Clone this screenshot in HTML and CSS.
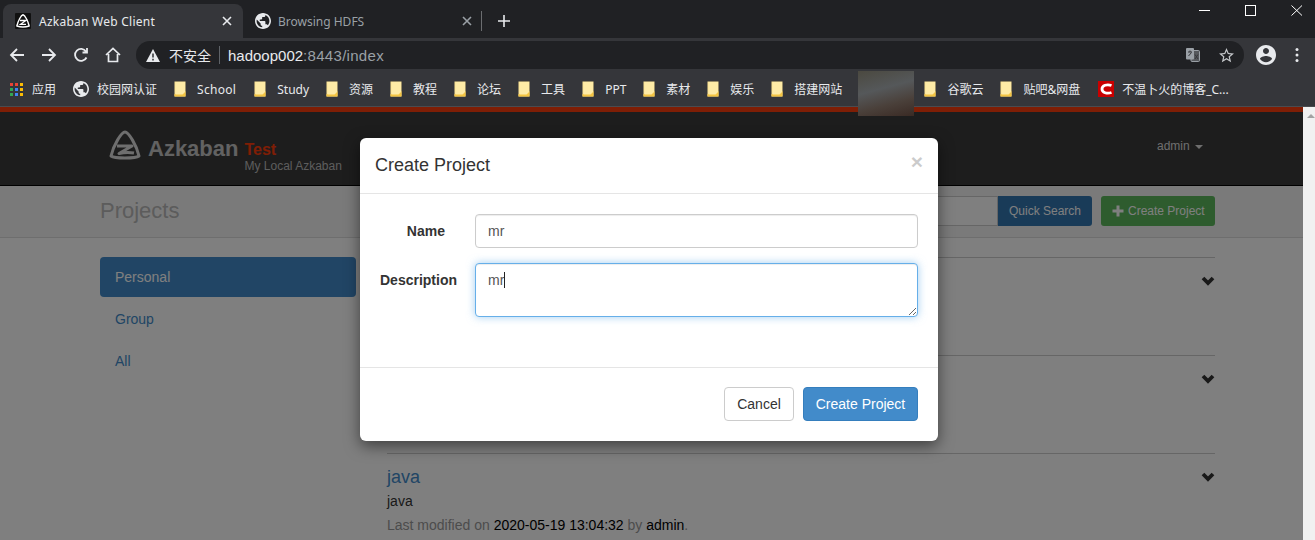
FILE: index.html
```html
<!DOCTYPE html>
<html lang="en">
<head>
    <meta charset="UTF-8">
    <meta name="viewport" content="width=device-width, initial-scale=1.0">
    <title>Azkaban Web Client</title>
    <link rel="stylesheet" href="styles.css">
</head>
<body>
    <svg class="defs" width="0" height="0">
        <symbol id="folder" viewBox="0 0 12 16">
            <path d="M0.500 0.500H11.500V15.500H0.500Z" fill="#fde293"/>
            <path d="M0.500 15.500H11.500V10L8.500 13H0.500Z" fill="#f5c542"/>
            <path d="M1.500 1H11V11L8.500 13.500H1.500Z" fill="#feeba6"/>
        </symbol>
        <symbol id="globe" viewBox="2 2 20 20">
            <path fill="#e8eaed" d="M12 2C6.480 2 2 6.480 2 12s4.480 10 10 10 10-4.480 10-10S17.520 2 12 2zm-1 17.930c-3.950-.490-7-3.850-7-7.930 0-.620.080-1.210.210-1.790L9 15v1c0 1.100.900 2 2 2v1.930zm6.900-2.540c-.260-.810-1-1.390-1.900-1.390h-1v-3c0-.550-.450-1-1-1H8v-2h2c.550 0 1-.450 1-1V7h2c1.100 0 2-.900 2-2v-.410c2.930 1.190 5 4.060 5 7.410 0 2.080-.800 3.970-2.100 5.390z"/>
        </symbol>
        <symbol id="x" viewBox="0 0 10 10">
            <path d="M1 1L9 9M9 1L1 9" stroke="currentColor" stroke-width="1.600" fill="none"/>
        </symbol>
        <symbol id="chevron" viewBox="0 0 14 10">
            <path d="M2 2L7 7L12 2" stroke="#333" stroke-width="3.800" fill="none"/>
        </symbol>
    </svg>

    <header class="browser">
        <div class="tabstrip">
            <div class="tab tab-active">
                <svg class="favicon" viewBox="0 0 16 16">
                    <rect width="16" height="16" rx="1" fill="#111"/>
                    <path d="M8 1.800C10 2.300 13 8 14.200 13C10 14.300 6 14.300 1.800 13C3 8 6 2.300 8 1.800Z" fill="none" stroke="#fff" stroke-width="1.400" stroke-linejoin="round"/>
                    <path d="M5 7.500H11L5.500 11.300H11" fill="none" stroke="#fff" stroke-width="1.300"/>
                </svg>
                <span class="tab-title">Azkaban Web Client</span>
                <svg class="tab-close"><use href="#x"></use></svg>
            </div>
            <div class="tab">
                <svg class="favicon"><use href="#globe"></use></svg>
                <span class="tab-title">Browsing HDFS</span>
                <svg class="tab-close"><use href="#x"></use></svg>
            </div>
            <div class="tab-sep"></div>
            <svg class="new-tab" viewBox="0 0 14 14"><path d="M7 1V13M1 7H13" stroke="#e8eaed" stroke-width="1.600"/></svg>
            <div class="window-controls">
                <svg viewBox="0 0 12 12"><path d="M0 5.500H11" stroke="#fff"/></svg>
                <svg viewBox="0 0 12 12"><rect x="0.500" y="0.500" width="10" height="10" fill="none" stroke="#fff"/></svg>
                <svg viewBox="0 0 12 12"><path d="M0.500 0.500L11 10.500M11 0.500L0.500 10.500" stroke="#fff"/></svg>
            </div>
        </div>

        <div class="toolbar">
            <div class="nav-buttons">
                <svg viewBox="0 0 16 16"><path d="M15 8H2M8 2L2 8L8 14" fill="none" stroke="#e8eaed" stroke-width="1.800"/></svg>
                <svg viewBox="0 0 16 16"><path d="M1 8H14M8 2L14 8L8 14" fill="none" stroke="#e8eaed" stroke-width="1.800"/></svg>
                <svg viewBox="0 0 16 16"><path d="M13.500 10.500A6 6 0 1 1 13 4.500M14 1V5.500H9.500" fill="none" stroke="#e8eaed" stroke-width="1.800"/></svg>
                <svg viewBox="0 0 16 16"><path d="M1 8L8 1.500L15 8M3.500 7V14.500H12.500V7" fill="none" stroke="#e8eaed" stroke-width="1.700"/></svg>
            </div>
            <div class="omnibox">
                <svg class="warn" viewBox="0 0 14 13"><path d="M7 0L14 13H0Z" fill="#e8eaed"/><path d="M7 4.500V8.500M7 9.800V11.500" stroke="#202124" stroke-width="1.400"/></svg>
                <span class="insecure">不安全</span>
                <span class="omni-sep"></span>
                <span class="url">hadoop002<span class="url-rest">:8443/index</span></span>
                <svg class="translate" viewBox="0 0 14 14">
                    <rect x="5" y="2.500" width="8.500" height="11" rx="1" fill="#55585c" stroke="#9aa0a6"/>
                    <rect x="0" y="0" width="8" height="11.500" rx="1" fill="#9aa0a6"/>
                    <path d="M2 4H6M4 2.500V4M2.500 8L5.500 4.500M9 6.500L12 11M12 6.500L9 11" stroke="#35363a" fill="none"/>
                </svg>
                <svg class="star" viewBox="2 2 20 20"><path fill="#c4c7ca" d="M22 9.240l-7.190-.620L12 2 9.190 8.630 2 9.240l5.460 4.730L5.820 21 12 17.270 18.180 21l-1.630-7.030L22 9.240zM12 15.400l-3.760 2.270 1-4.280-3.320-2.880 4.380-.380L12 6.100l1.710 4.040 4.380.380-3.320 2.880 1 4.280L12 15.400z"/></svg>
            </div>
            <svg class="profile" viewBox="2 2 20 20">
                <path fill="#e8eaed" d="M12 2C6.480 2 2 6.480 2 12s4.480 10 10 10 10-4.480 10-10S17.520 2 12 2zm0 3c1.660 0 3 1.340 3 3s-1.340 3-3 3-3-1.340-3-3 1.340-3 3-3zm0 14.200c-2.500 0-4.710-1.280-6-3.220.030-1.990 4-3.080 6-3.080 1.990 0 5.970 1.090 6 3.080-1.290 1.940-3.500 3.220-6 3.220z"/>
            </svg>
            <svg class="menu-dots" viewBox="0 0 4 16"><circle cx="2" cy="2.500" r="1.500" fill="#e8eaed"/><circle cx="2" cy="8" r="1.500" fill="#e8eaed"/><circle cx="2" cy="13.500" r="1.500" fill="#e8eaed"/></svg>
        </div>

        <div class="bookmarks">
            <a class="bm">
                <svg class="bm-icon apps" viewBox="0 0 13 13">
                    <rect width="3" height="3" fill="#ea4335"/><rect x="5" width="3" height="3" fill="#ea4335"/><rect x="10" width="3" height="3" fill="#fbbc05"/>
                    <rect y="5" width="3" height="3" fill="#34a853"/><rect x="5" y="5" width="3" height="3" fill="#4285f4"/><rect x="10" y="5" width="3" height="3" fill="#fbbc05"/>
                    <rect y="10" width="3" height="3" fill="#34a853"/><rect x="5" y="10" width="3" height="3" fill="#4285f4"/><rect x="10" y="10" width="3" height="3" fill="#fbbc05"/>
                </svg>
                应用
            </a>
            <a class="bm"><svg class="bm-icon globe"><use href="#globe"></use></svg>校园网认证</a>
            <a class="bm bm-wide bm-pad"><svg class="bm-icon"><use href="#folder"></use></svg>School</a>
            <a class="bm"><svg class="bm-icon"><use href="#folder"></use></svg>Study</a>
            <a class="bm"><svg class="bm-icon"><use href="#folder"></use></svg>资源</a>
            <a class="bm"><svg class="bm-icon"><use href="#folder"></use></svg>教程</a>
            <a class="bm"><svg class="bm-icon"><use href="#folder"></use></svg>论坛</a>
            <a class="bm"><svg class="bm-icon"><use href="#folder"></use></svg>工具</a>
            <a class="bm"><svg class="bm-icon"><use href="#folder"></use></svg>PPT</a>
            <a class="bm"><svg class="bm-icon"><use href="#folder"></use></svg>素材</a>
            <a class="bm"><svg class="bm-icon"><use href="#folder"></use></svg>娱乐</a>
            <a class="bm bm-before-blur"><svg class="bm-icon"><use href="#folder"></use></svg>搭建网站</a>
            <a class="bm"><svg class="bm-icon"><use href="#folder"></use></svg>谷歌云</a>
            <a class="bm bm-pad"><svg class="bm-icon"><use href="#folder"></use></svg>贴吧&amp;网盘</a>
            <a class="bm">
                <svg class="bm-icon csdn" viewBox="0 0 16 16"><rect width="16" height="16" fill="#c90000"/><path d="M13.500 4.500C9 2.800 4 4.500 4 8S9 13.200 13.500 11.500" fill="none" stroke="#fff" stroke-width="2.800"/></svg>
                不温卜火的博客_C...
            </a>
        </div>
    </header>
    <div class="blur-patch"></div>

    <div class="viewport">
        <div class="page">
            <div class="stripe"></div>
            <div class="az-header">
                <svg class="az-logo" viewBox="0 0 32 30">
                    <path d="M16 2C19.500 2 27.500 15 30 26C28 27.500 22 28 16 28C10 28 4 27.500 2 26C4.500 15 12.500 2 16 2Z" fill="none" stroke="#ddd" stroke-width="3" stroke-linejoin="round"/>
                    <path d="M8 16H23L10 23.500C14 22.500 20 22 25 23" fill="none" stroke="#ddd" stroke-width="3" stroke-linejoin="round"/>
                </svg>
                <div class="az-name">Azkaban</div>
                <div class="az-env">
                    <div class="az-test">Test</div>
                    <div class="az-sub">My Local Azkaban</div>
                </div>
                <div class="az-user">admin <span class="caret"></span></div>
            </div>
            <div class="az-subheader">
                <h1>Projects</h1>
                <div class="search">
                    <input class="search-input" type="text">
                    <button class="btn btn-blue btn-search">Quick Search</button>
                </div>
                <button class="btn btn-green">
                    <svg class="plus" viewBox="0 0 12 12"><path d="M6 0.500V11.500M0.500 6H11.500" stroke="#fff" stroke-width="3"/></svg>
                    Create Project
                </button>
            </div>
            <div class="az-main">
                <ul class="side-nav">
                    <li class="active">Personal</li>
                    <li>Group</li>
                    <li>All</li>
                </ul>
                <div class="project-list">
                    <div class="project">
                        <svg class="chevron"><use href="#chevron"></use></svg>
                    </div>
                    <div class="project">
                        <svg class="chevron"><use href="#chevron"></use></svg>
                    </div>
                    <div class="project">
                        <svg class="chevron"><use href="#chevron"></use></svg>
                        <h4>java</h4>
                        <p class="project-desc">java</p>
                        <p class="project-meta">Last modified on <strong>2020-05-19 13:04:32</strong> by <strong>admin</strong>.</p>
                    </div>
                </div>
            </div>
            <div class="backdrop"></div>
            <div class="modal">
                <div class="modal-header">
                    <h4>Create Project</h4>
                    <span class="close">×</span>
                </div>
                <div class="modal-body">
                    <div class="form-row">
                        <label for="name">Name</label>
                        <input id="name" type="text" value="mr">
                    </div>
                    <div class="form-row">
                        <label for="desc">Description</label>
                        <div class="textarea-wrap">
                            <textarea id="desc">mr</textarea>
                            <span class="text-caret"></span>
                        </div>
                    </div>
                </div>
                <div class="modal-footer">
                    <button class="btn btn-default">Cancel</button>
                    <button class="btn btn-primary">Create Project</button>
                </div>
            </div>
        </div>
        <div class="scrollbar"><span class="scroll-up"></span></div>
    </div>
</body>
</html>
```

FILE: styles.css
```css
body {
    margin: 0;
    height: 540px;
    overflow: hidden;
    font-family: 'Liberation Sans', Arial, sans-serif;
    font-size: 14px;
    background-color: #fff;
    color: #333;
}

.defs {
    display: block;
}

/* browser chrome */
.browser {
    height: 107px;
    font-family: 'Noto Sans', 'Noto Sans CJK SC', sans-serif;
    font-size: 12px;
    color: #e8eaed;
}

.tabstrip {
    display: flex;
    align-items: flex-end;
    height: 38px;
    padding-left: 3px;
    background-color: #202124;
    position: relative;
}

.tab {
    display: flex;
    align-items: center;
    width: 240px;
    height: 34px;
    box-sizing: border-box;
    padding: 0 11px 0 12px;
    color: #9aa0a6;
}

.tab-active {
    background-color: #35363a;
    border-radius: 8px 8px 0 0;
    color: #e8eaed;
}

.favicon {
    flex: none;
    width: 16px;
    height: 16px;
}

.tab-title {
    flex: 1;
    margin-left: 8px;
}

.tab-active .tab-title {
    letter-spacing: 0.25px;
}

.tab:not(.tab-active) .tab-title {
    margin-left: 7px;
}

.tab-close {
    width: 10px;
    height: 10px;
}

.tab-sep {
    width: 1px;
    height: 20px;
    margin: 0 0 7px -2px;
    background-color: #6b6d70;
}

.new-tab {
    width: 14px;
    height: 14px;
    margin: 0 0 10px 15px;
}

.window-controls {
    position: absolute;
    top: 5px;
    right: 12px;
    display: flex;
    gap: 34px;
}

.window-controls svg {
    width: 12px;
    height: 12px;
}

.toolbar {
    display: flex;
    align-items: center;
    height: 34px;
    background-color: #35363a;
}

.nav-buttons {
    display: flex;
    gap: 16px;
    width: 136px;
    box-sizing: border-box;
    padding-left: 9px;
}

.nav-buttons svg {
    width: 16px;
    height: 16px;
}

.omnibox {
    display: flex;
    align-items: center;
    width: 1108px;
    height: 28px;
    box-sizing: border-box;
    padding: 0 10px;
    background-color: #202124;
    border-radius: 14px;
}

.warn {
    width: 14px;
    height: 13px;
}

.insecure {
    margin-left: 9px;
    font-size: 14px;
}

.omni-sep {
    width: 1px;
    height: 18px;
    margin: 0 8px;
    background-color: #5f6368;
}

.url {
    flex: 1;
    font-family: 'Liberation Sans', sans-serif;
    font-size: 15px;
    color: #e8eaed;
}

.url-rest {
    color: #9aa0a6;
    letter-spacing: 0.3px;
}

.translate {
    width: 14px;
    height: 14px;
}

.star {
    width: 15px;
    height: 15px;
    margin-left: 19px;
}

.profile {
    width: 20px;
    height: 20px;
    margin-left: 12px;
}

.menu-dots {
    width: 4px;
    height: 16px;
    margin-left: 19px;
}

.bookmarks {
    display: flex;
    align-items: center;
    height: 35px;
    box-sizing: border-box;
    padding-left: 10px;
    gap: 17px;
    background-color: #35363a;
    border-bottom: 1px solid #4a4b4f;
    white-space: nowrap;
}

.bm {
    display: flex;
    align-items: center;
    gap: 10px;
}

.bm-icon {
    flex: none;
    width: 12px;
    height: 16px;
    margin-right: 1px;
}

.bm-pad {
    margin-right: 1px;
}

.bm-wide {
    letter-spacing: 0.3px;
}

.apps {
    width: 13px;
    height: 13px;
    margin-right: -1px;
}

.globe,
.csdn {
    width: 16px;
    height: 16px;
    margin-right: -2px;
}

.bm-before-blur {
    margin-right: 65px;
}

.blur-patch {
    position: absolute;
    left: 858px;
    top: 71px;
    width: 56px;
    height: 45px;
    z-index: 5;
    background: linear-gradient(165deg, #4b4940, #55585a 40%, #4a403a 70%, #3a2a24);
}

/* azkaban page */
.viewport {
    display: flex;
    height: 433px;
    overflow: hidden;
}

.page {
    position: relative;
    flex: 1;
    overflow: hidden;
    background-color: #fff;
}

.stripe {
    height: 5px;
    background-color: #ff3d0a;
}

.az-header {
    display: flex;
    height: 74px;
    padding-left: 109px;
    padding-right: 100px;
    box-sizing: border-box;
    background-color: #3a3a3a;
    border-bottom: 1px solid #000;
}

.az-logo {
    width: 32px;
    height: 30px;
    margin-top: 18px;
}

.az-name {
    margin: 22px 0 0 7px;
    font-size: 22px;
    font-weight: bold;
    line-height: 30px;
    color: #fff;
    opacity: 0.7;
}

.az-env {
    margin: 30px 0 0 6px;
}

.az-test {
    font-size: 16px;
    font-weight: bold;
    line-height: 16px;
    color: #ff3c0a;
}

.az-sub {
    margin-top: 1px;
    font-size: 12px;
    line-height: 14px;
    color: #bbb;
}

.az-user {
    margin: 27px 0 0 auto;
    font-size: 12px;
    color: #ddd;
}

.caret {
    display: inline-block;
    margin-left: 2px;
    vertical-align: middle;
    border-top: 4px solid #ddd;
    border-left: 4px solid transparent;
    border-right: 4px solid transparent;
}

.az-subheader {
    display: flex;
    align-items: center;
    height: 52px;
    box-sizing: border-box;
    padding: 0 88px 1px 100px;
    background-color: #f5f5f5;
    border-bottom: 1px solid #ddd;
}

.az-subheader h1 {
    flex: 1;
    margin: 0;
    font-size: 22px;
    font-weight: normal;
    color: #b8b8b8;
}

.search {
    display: flex;
    margin-right: 9px;
}

.search-input {
    width: 220px;
    height: 30px;
    padding: 0;
    box-sizing: border-box;
    border: 1px solid #ccc;
    background-color: #fff;
}

.btn {
    box-sizing: border-box;
    font-family: 'Liberation Sans', Arial, sans-serif;
    font-size: 12px;
    height: 30px;
    border: 1px solid transparent;
    border-radius: 3px;
    cursor: pointer;
}

.btn-blue {
    width: 94px;
    background-color: #3276b1;
    color: #fff;
    border-radius: 0 3px 3px 0;
}

.btn-green {
    display: flex;
    align-items: center;
    gap: 4px;
    width: 114px;
    padding: 0 0 0 10px;
    background-color: #5cb85c;
    color: #fff;
}

.plus {
    width: 12px;
    height: 12px;
}

.az-main {
    display: flex;
    gap: 31px;
    padding: 19px 88px 0 100px;
}

.side-nav {
    flex: none;
    width: 256px;
    margin: 0;
    padding: 0;
    list-style: none;
}

.side-nav li {
    height: 40px;
    margin-bottom: 2px;
    padding-left: 15px;
    line-height: 40px;
    border-radius: 4px;
    color: #428bca;
}

.side-nav .active {
    background-color: #428bca;
    color: #fff;
}

.project-list {
    flex: 1;
}

.project {
    position: relative;
    height: 98px;
    box-sizing: border-box;
    padding-top: 13px;
    border-top: 1px solid #ccc;
}

.chevron {
    position: absolute;
    top: 18px;
    right: 0;
    width: 14px;
    height: 10px;
}

.project h4 {
    margin: 0;
    font-size: 18px;
    font-weight: normal;
    line-height: 20px;
    color: #428bca;
}

.project-desc {
    margin: 4px 0 0;
    line-height: 20px;
}

.project-meta {
    margin: 4px 0 0;
    line-height: 20px;
    color: #999;
}

.project-meta strong {
    font-weight: normal;
    color: #000;
}

/* dim + dialog */
.backdrop {
    position: absolute;
    inset: 0;
    background-color: rgba(0, 0, 0, 0.5);
}

.modal {
    position: absolute;
    left: 360px;
    top: 31px;
    width: 578px;
    background-color: #fff;
    border-radius: 6px;
    box-shadow: 0 5px 15px rgba(0, 0, 0, 0.5);
}

.modal-header {
    display: flex;
    align-items: flex-start;
    justify-content: space-between;
    height: 56px;
    box-sizing: border-box;
    padding: 15px;
    border-bottom: 1px solid #e5e5e5;
}

.modal-header h4 {
    margin: 0;
    font-size: 18px;
    font-weight: normal;
    line-height: 24px;
}

.close {
    font-size: 21px;
    font-weight: bold;
    line-height: 18px;
    color: #000;
    opacity: 0.2;
}

.modal-body {
    height: 173px;
    box-sizing: border-box;
    padding: 20px 20px 0;
}

.form-row {
    display: flex;
    margin-bottom: 15px;
}

.form-row label {
    flex: none;
    width: 65px;
    margin-right: 30px;
    padding-top: 9px;
    font-weight: bold;
    line-height: 16px;
    text-align: right;
    white-space: nowrap;
}

.form-row input,
.form-row textarea {
    display: block;
    width: 443px;
    box-sizing: border-box;
    padding: 6px 12px;
    font-family: 'Liberation Sans', Arial, sans-serif;
    font-size: 14px;
    line-height: 20px;
    color: #555;
    border: 1px solid #ccc;
    border-radius: 4px;
    outline: none;
}

.form-row input {
    height: 34px;
    box-shadow: inset 0 1px 1px rgba(0, 0, 0, 0.075);
}

.form-row textarea {
    height: 54px;
    border-color: #66afe9;
    box-shadow: inset 0 1px 1px rgba(0, 0, 0, 0.075), 0 0 8px rgba(102, 175, 233, 0.6);
}

.textarea-wrap {
    position: relative;
}

.text-caret {
    position: absolute;
    left: 29px;
    top: 9px;
    width: 1px;
    height: 16px;
    background-color: #222;
}

.modal-footer {
    display: flex;
    justify-content: flex-end;
    gap: 9px;
    padding: 19px 20px 20px;
    border-top: 1px solid #e5e5e5;
}

.modal-footer .btn {
    height: 34px;
    font-size: 14px;
    border-radius: 4px;
}

.btn-default {
    width: 70px;
    background-color: #fff;
    border-color: #ccc;
    color: #333;
}

.btn-primary {
    width: 115px;
    background-color: #428bca;
    border-color: #357ebd;
    color: #fff;
}

.scrollbar {
    flex: none;
    width: 12px;
    background-color: #f1f1f1;
}

.scroll-up {
    display: block;
    width: 0;
    margin: 7px 0 0 4px;
    border-bottom: 4px solid #a3a3a3;
    border-left: 4px solid transparent;
    border-right: 4px solid transparent;
}
```
